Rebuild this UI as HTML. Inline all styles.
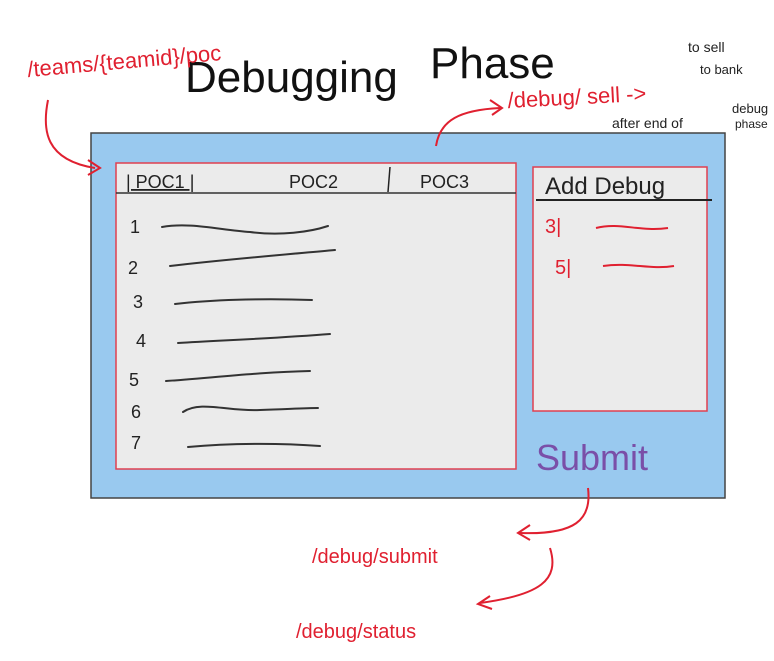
<!DOCTYPE html>
<html><head><style>
body{margin:0;width:774px;height:656px;background:#fff;overflow:hidden;font-family:"Liberation Sans",sans-serif}
svg text{font-family:"Liberation Sans",sans-serif}
</style></head><body>
<svg width="774" height="656" viewBox="0 0 774 656" xmlns="http://www.w3.org/2000/svg">
<rect x="91" y="133" width="634" height="365" fill="#99c9ef" stroke="#444" stroke-width="1.5"/>
<rect x="116" y="163" width="400" height="306" fill="#ebebeb" stroke="#e04050" stroke-width="1.5"/>
<line x1="116" y1="193" x2="516" y2="193" stroke="#333" stroke-width="1.5"/>
<rect x="533" y="167" width="174" height="244" fill="#ebebeb" stroke="#e04050" stroke-width="1.5"/>
<line x1="536" y1="200" x2="712" y2="200" stroke="#222" stroke-width="2"/>
<g font-size="18" fill="#222">
<text x="126" y="188" text-decoration="underline">| POC1 |</text>
<text x="289" y="188">POC2</text>
<line x1="390" y1="167" x2="388" y2="192" stroke="#222" stroke-width="1.5"/>
<text x="420" y="188">POC3</text>
<text x="545" y="194" font-size="24">Add Debug</text>
</g>
<g font-size="18" fill="#222">
<text x="130" y="233">1</text><text x="128" y="274">2</text><text x="133" y="308">3</text>
<text x="136" y="347">4</text><text x="129" y="386">5</text><text x="131" y="418">6</text><text x="131" y="449">7</text>
</g>
<g fill="none" stroke="#333" stroke-width="2" stroke-linecap="round">
<path d="M162 227 C190 222 220 230 250 232 C280 236 310 232 328 226"/>
<path d="M170 266 C220 260 280 255 335 250"/>
<path d="M175 304 C210 300 260 298 312 300"/>
<path d="M178 343 C230 340 280 338 330 334"/>
<path d="M166 381 C210 378 260 372 310 371"/>
<path d="M183 412 C200 400 230 412 260 410 C290 409 305 408 318 408"/>
<path d="M188 447 C230 443 280 443 320 446"/>
</g>
<g fill="#e02030" font-size="20">
<text x="545" y="233">3|</text><text x="555" y="274">5|</text>
</g>
<g fill="none" stroke="#e02030" stroke-width="2">
<path d="M596 228 C620 222 640 232 668 228"/>
<path d="M603 266 C630 262 650 270 674 266"/>
</g>
<text x="536" y="470" font-size="36" fill="#7a4fa8">Submit</text>
<text x="185" y="92" font-size="44" fill="#111">Debugging</text>
<text x="430" y="78" font-size="44" fill="#111">Phase</text>
<text x="28" y="77" font-size="22" fill="#e02030" transform="rotate(-5 28 77)">/teams/{teamid}/poc</text>
<text x="508" y="108" font-size="22" fill="#e02030" transform="rotate(-3 508 108)">/debug/ sell -&gt;</text>
<text x="688" y="52" font-size="14" fill="#222">to sell</text>
<text x="700" y="74" font-size="13" fill="#222">to bank</text>
<text x="612" y="128" font-size="14" fill="#222">after end of</text>
<text x="732" y="113" font-size="13" fill="#222">debug</text>
<text x="735" y="128" font-size="12" fill="#222">phase</text>
<text x="312" y="563" font-size="20" fill="#e02030">/debug/submit</text>
<text x="296" y="638" font-size="20" fill="#e02030">/debug/status</text>
<g fill="none" stroke="#e02030" stroke-width="2">
<path d="M48 100 C42 130 45 160 95 168"/><path d="M88 160 L100 168 L88 175"/>
<path d="M436 146 C440 120 460 110 500 108"/><path d="M490 100 L502 108 L492 115"/>
<path d="M588 488 C592 520 575 535 520 533"/><path d="M530 525 L518 533 L530 540"/>
<path d="M550 548 C560 580 540 595 480 603"/><path d="M490 596 L478 604 L492 609"/>
</g>
</svg>
</body></html>
